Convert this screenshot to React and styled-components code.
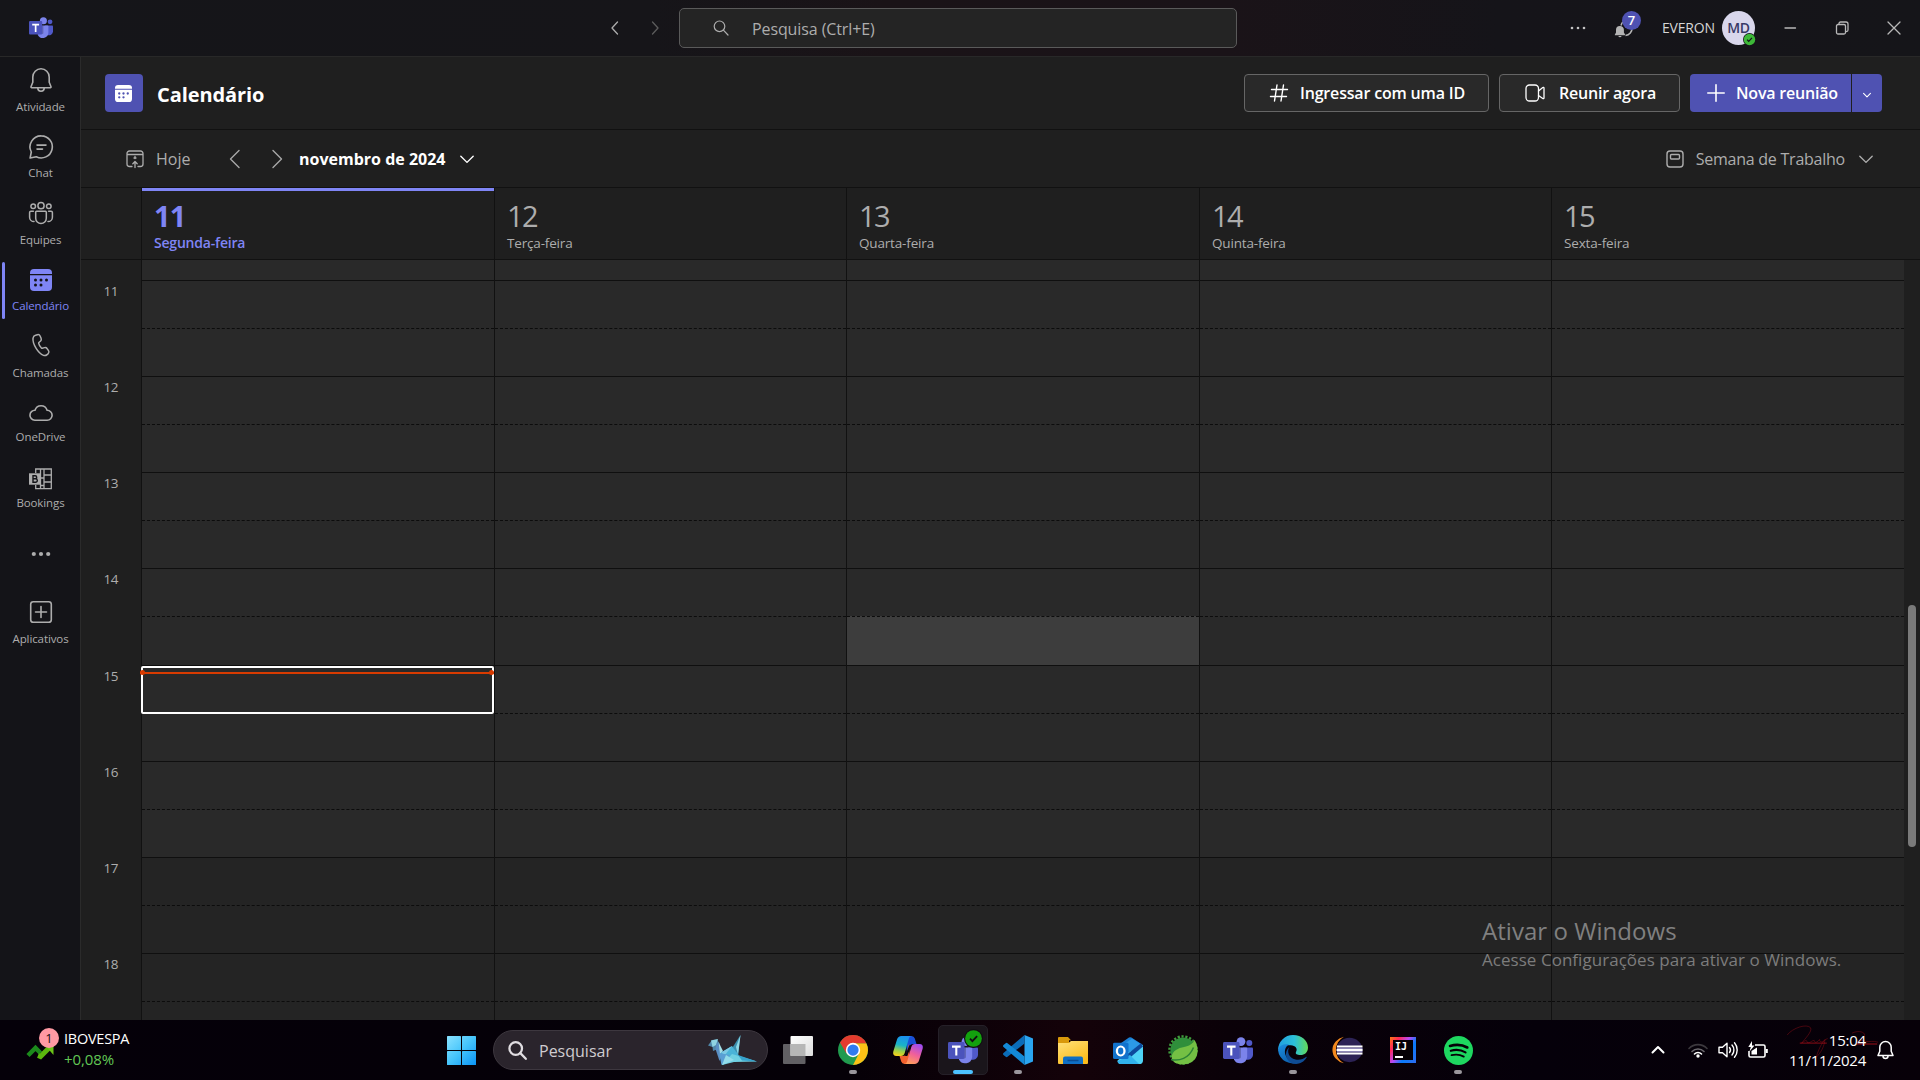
import React from "react";
import styled, { createGlobalStyle, css } from "styled-components";

const GlobalStyle = createGlobalStyle`
  *, *::before, *::after { box-sizing: border-box; }
  html, body { margin: 0; padding: 0; background: #1f1f1f; }
  body {
    width: 1920px; height: 1080px; overflow: hidden;
    font-family: "Open Sans", "Noto Sans", sans-serif;
    color: #fff;
  }
  svg { display: block; flex: none; overflow: visible; }
`;

const Screen = styled.div`
  width: 1920px;
  height: 1080px;
  display: flex;
  flex-direction: column;
  position: relative;
`;

/* ---------- shared ---------- */
const Text = styled.span`
  white-space: nowrap;
  display: block;
  font-size: ${(p) => p.$size || 16}px;
  font-weight: ${(p) => p.$weight || 400};
  letter-spacing: ${(p) => p.$track || 0}px;
  line-height: ${(p) => p.$line || 20}px;
  color: ${(p) => p.$color || "#fff"};
  margin-top: ${(p) => p.$drop || 0}px;
`;

const Stroke = ({ w, h = w, box, color = "currentColor", width = 1.3, children }) => (
  <svg width={w} height={h} viewBox={box || `0 0 ${w} ${h}`} fill="none" stroke={color} strokeWidth={width} strokeLinecap="round" strokeLinejoin="round">
    {children}
  </svg>
);

/* ---------- title bar ---------- */
const TitleBar = styled.header`
  height: 57px;
  flex: none;
  display: flex;
  align-items: center;
  border-bottom: 1px solid #282828;
  background: linear-gradient(90deg, #151519 0%, #161519 34%, #1a1317 46%, #1a1318 64%, #151419 78%, #151519 100%);
  color: #d6d6d6;
`;
const LogoSlot = styled.div`
  width: 607px;
  padding-left: 29px;
`;
const NavPair = styled.div`
  display: flex;
  width: 72px;
  gap: 24px;
  color: #adadad;
  & > :last-child { color: #5c5c5c; }
`;
const SearchBox = styled.div`
  width: 558px;
  height: 40px;
  border: 1px solid #5a5a5a;
  border-radius: 5px;
  background: #242424;
  display: flex;
  align-items: center;
  padding-left: 33px;
  gap: 23px;
  color: #adadad;
`;
const TitleRight = styled.div`
  flex: 1;
  display: flex;
  align-items: center;
  padding-left: 333px;
`;
const BellWrap = styled.div`
  position: relative;
  width: 24px;
  height: 24px;
  margin-left: 28px;
  color: #b4b4b4;
`;
const CountBadge = styled.span`
  position: absolute;
  left: 8px;
  top: -5px;
  width: 19px;
  height: 19px;
  border-radius: 50%;
  background: #4f52b2;
  color: #fff;
  font-size: 13px;
  font-weight: 600;
  line-height: 19px;
  text-align: center;
`;
const UserName = styled(Text)`
  width: 52px;
  margin: 0 8px 0 24px;
`;
const Avatar = styled.div`
  position: relative;
  width: 33px;
  height: 34px;
  border-radius: 50%;
  background: #d9d7ec;
  color: #383966;
  font-size: 14px;
  font-weight: 600;
  line-height: 34px;
  text-align: center;
  letter-spacing: -0.3px;
`;
const Presence = styled.span`
  position: absolute;
  right: -1px;
  bottom: -1px;
`;
const WindowButtons = styled.div`
  display: flex;
  align-items: center;
  margin-left: 28px;
  gap: 38px;
  color: #b8b8b8;
`;

/* ---------- body ---------- */
const Body = styled.div`
  height: 963px;
  display: flex;
  flex: none;
`;
const Rail = styled.nav`
  width: 81px;
  flex: none;
  border-right: 1px solid #2b2b2b;
  background: #141418;
  display: flex;
  flex-direction: column;
`;
const RailItem = styled.div`
  position: relative;
  height: ${(p) => p.$h}px;
  flex: none;
  padding: 10px 0 0 1px;
  display: flex;
  flex-direction: column;
  align-items: center;
  gap: ${(p) => p.$gap || 6}px;
  color: ${(p) => (p.$active ? "#7f85f5" : "#adadad")};
  ${(p) =>
    p.$active &&
    css`
      &::before {
        content: "";
        position: absolute;
        left: 2px;
        top: 5px;
        width: 3px;
        height: 57px;
        border-radius: 2px;
        background: #7f85f5;
      }
    `}
`;
const RailIcon = styled.div`
  height: 26px;
  display: flex;
  align-items: center;
  justify-content: center;
`;
const RailLabel = styled.span`
  font-size: 11.5px;
  letter-spacing: -0.1px;
  line-height: 16px;
  white-space: nowrap;
`;

const Main = styled.main`
  flex: 1;
  background: #1f1f1f;
  display: flex;
  flex-direction: column;
  min-width: 0;
`;
const PageHeader = styled.div`
  height: 73px;
  flex: none;
  border-bottom: 1px solid #111;
  display: flex;
  align-items: center;
  padding: 0 38px 0 24px;
`;
const AppTile = styled.div`
  width: 38px;
  height: 38px;
  border-radius: 4px;
  background: #4f52b2;
  display: flex;
  align-items: center;
  justify-content: center;
  padding-right: 1px;
  margin-right: 14px;
`;
const Actions = styled.div`
  margin-left: auto;
  display: flex;
  gap: 10px;
`;
const OutlineButton = styled.button`
  width: ${(p) => p.$w}px;
  height: 38px;
  padding: 0 0 0 ${(p) => p.$pad}px;
  border: 1px solid #666;
  border-radius: 4px;
  background: #292929;
  color: #fff;
  font: inherit;
  display: flex;
  align-items: center;
  gap: ${(p) => p.$gap}px;
`;
const SplitButton = styled.div`
  width: 192px;
  height: 38px;
  border-radius: 4px;
  background: #4f52b2;
  display: flex;
  overflow: hidden;
`;
const SplitMain = styled.div`
  width: 162px;
  border-right: 1px solid #1f1f1f;
  display: flex;
  align-items: center;
  padding-left: 17px;
  gap: 11px;
`;
const SplitMore = styled.div`
  flex: 1;
  display: flex;
  align-items: center;
  justify-content: center;
  padding-top: 4px;
`;
const Toolbar = styled.div`
  height: 58px;
  flex: none;
  border-bottom: 1px solid #111;
  display: flex;
  align-items: center;
  padding: 0 45px;
  color: #adadad;
`;
const TodayGroup = styled.div`
  display: flex;
  align-items: center;
  gap: 12px;
  width: 103px;
`;
const Arrows = styled.div`
  display: flex;
  gap: 30px;
  width: 70px;
  color: #a8a8a8;
`;
const MonthPicker = styled.div`
  display: flex;
  align-items: center;
  gap: 13px;
  color: #fff;
`;
const ViewPicker = styled.div`
  margin-left: auto;
  display: flex;
  align-items: center;
  gap: 12px;
`;

const DayHeaderRow = styled.div`
  height: 72px;
  flex: none;
  display: flex;
  border-bottom: 1px solid #111;
  padding-left: 60px;
`;
const columns = css`
  display: grid;
  grid-template-columns: 353px 352px 353px 352px 353px;
`;
const DayHeaders = styled.div`
  ${columns}
`;
const DayHeader = styled.div`
  border-left: 1px solid #111;
  padding: 11px 0 0 12px;
  color: ${(p) => (p.$today ? "#7f85f5" : "#adadad")};
  box-shadow: ${(p) => (p.$today ? "inset 0 3px 0 #7f85f5" : "none")};
`;
const DayNumber = styled.div`
  font-size: 29px;
  line-height: 34px;
  font-weight: ${(p) => (p.$today ? 700 : 400)};
  letter-spacing: ${(p) => (p.$today ? -0.9 : -1.5)}px;
`;
const DayName = styled.div`
  margin-top: 1px;
  font-size: ${(p) => (p.$today ? 14 : 13.5)}px;
  line-height: 18px;
  font-weight: ${(p) => (p.$today ? 600 : 400)};
  letter-spacing: ${(p) => (p.$today ? -0.2 : -0.17)}px;
`;
const Grid = styled.div`
  flex: 1;
  min-height: 0;
  overflow: hidden;
  display: flex;
`;
const Hours = styled.div`
  width: 60px;
  flex: none;
  padding-top: 22px;
`;
const Hour = styled.div`
  height: ${(p) => p.$h}px;
  padding-left: 22.5px;
  font-size: 13.5px;
  line-height: 18px;
  letter-spacing: -0.5px;
  color: #adadad;
`;
const Columns = styled.div`
  flex: none;
  ${columns}
`;
const Column = styled.div`
  border-left: 1px solid #111;
  position: relative;
`;
const Slot = styled.div`
  height: ${(p) => p.$h}px;
  background: ${(p) => (p.$hover ? "#3d3d3d" : p.$off ? "#242424" : "#292929")};
  border-top: ${(p) => (p.$first ? "none" : p.$half ? "1px dashed #0c0c0c" : "1px solid #0f0f0f")};
`;
const SelectedSlot = styled.div`
  position: absolute;
  left: -1px;
  top: 406px;
  width: 353px;
  height: 48px;
  border: 2px solid #fff;
  border-radius: 2px;
`;
const NowLine = styled.div`
  position: absolute;
  left: -2px;
  top: 412px;
  width: 354px;
  height: 2px;
  background: #d83b01;
  &::before, &::after {
    content: "";
    position: absolute;
    top: -2px;
    width: 5px;
    height: 5px;
    border-radius: 50%;
    background: #d83b01;
  }
  &::before { left: 0; }
  &::after { right: 0; }
`;
const ScrollTrack = styled.div`
  flex: 1;
  padding: 345px 4px 0;
`;
const ScrollThumb = styled.div`
  height: 242px;
  border-radius: 4px;
  background: #7a7a7a;
`;

/* ---------- activation notice ---------- */
const Notice = styled.div`
  position: absolute;
  left: 1482px;
  top: 914px;
`;

/* ---------- taskbar ---------- */
const Taskbar = styled.footer`
  height: 60px;
  flex: none;
  background: linear-gradient(90deg, #050009 0%, #050007 44%, #140209 56%, #0a0108 64%, #05000a 80%, #070008 100%);
  display: flex;
  align-items: center;
`;
const Widget = styled.div`
  width: 434px;
  padding: 0 0 2px 26px;
  display: flex;
  align-items: center;
  gap: 10px;
`;
const WidgetIcon = styled.div`
  position: relative;
  width: 28px;
  height: 38px;
  padding-top: 13px;
`;
const WidgetBadge = styled.span`
  position: absolute;
  left: 13px;
  top: -2px;
  width: 20px;
  height: 20px;
  border-radius: 50%;
  background: #ff99a4;
  color: #1b1013;
  font-size: 13px;
  line-height: 20px;
  text-align: center;
`;
const StartSlot = styled.div`
  width: 59px;
  padding-left: 13px;
`;
const TaskSearch = styled.div`
  width: 275px;
  height: 40px;
  border-radius: 20px;
  background: #2a242c;
  border: 1px solid #3d373f;
  display: flex;
  align-items: center;
  padding-left: 14px;
`;
const TaskSearchText = styled(Text)`
  margin: 2px 0 0 12px;
`;
const BirdSlot = styled.div`
  margin-left: auto;
  margin-right: 10px;
`;
const Apps = styled.div`
  display: flex;
  margin-left: 2.5px;
`;
const AppSlot = styled.div`
  position: relative;
  width: 55px;
  height: 60px;
  display: flex;
  align-items: center;
  justify-content: center;
  ${(p) =>
    p.$running &&
    css`
      &::after {
        content: "";
        position: absolute;
        left: 50%;
        top: 50px;
        width: ${p.$current ? 20 : 8}px;
        height: 4px;
        margin-left: ${p.$current ? -10 : -4}px;
        border-radius: 2px;
        background: ${p.$current ? "#4cc2ff" : "#9a969c"};
      }
    `}
`;
const CurrentTile = styled.div`
  width: 50px;
  height: 50px;
  border-radius: 5px;
  border: 1px solid #252028;
  background: #1a151b;
  display: flex;
  align-items: center;
  justify-content: center;
`;
const CheckBadge = styled.div`
  position: absolute;
  left: 28px;
  top: 9px;
`;
const Tray = styled.div`
  margin-left: auto;
  padding-right: 26px;
  display: flex;
  align-items: center;
`;
const TrayIcon = styled.div`
  width: ${(p) => p.$w}px;
  display: flex;
`;
const Clock = styled.div`
  position: relative;
  width: 98px;
  margin-right: 11px;
  display: flex;
  flex-direction: column;
  align-items: flex-end;
  & > span { position: relative; }
`;
const Signature = styled.div`
  position: absolute;
  left: 17px;
  top: -4px;
`;

/* ---------- icons ---------- */
const Chevron = ({ dir, size = 16, width = 1.3 }) => {
  const d = {
    left: "M10.500 2L5 8l5.500 6",
    right: "M5.500 2L11 8l-5.500 6",
    down: "M2.500 5.500L8 11l5.500-5.500",
    up: "M2.500 10.500L8 5l5.500 5.500",
  }[dir];
  return (
    <Stroke w={size} box="0 0 16 16" width={width}>
      <path d={d} vectorEffect="non-scaling-stroke" />
    </Stroke>
  );
};

const BigAngle = ({ dir }) => (
  <Stroke w={12} h={20} width={1.4}>
    <path d={dir === "left" ? "M10 1.500L1.500 10L10 18.500" : "M2 1.500L10.500 10L2 18.500"} />
  </Stroke>
);

const TeamsLogo = ({ w, h }) => (
  <svg width={w} height={h} viewBox="0 0 30 27">
    <circle cx="26.300" cy="6" r="3" fill="#5059c9" />
    <circle cx="18" cy="4.600" r="4.400" fill="#7b83eb" />
    <path d="M20 10.500h9a1 1 0 011 1V18a5 5 0 01-7 4.400z" fill="#5059c9" />
    <path d="M11 10.500h12.200a1 1 0 011 1V20a7 7 0 01-13.200 2.500z" fill="#7b83eb" />
    <path d="M11 10.500h7V20a1.400 1.400 0 01-1.400 1.400H11z" fill="#000" opacity=".22" />
    <rect x="0" y="5" width="16.500" height="17" rx="1.400" fill="#4b53bc" />
    <path d="M4 9.600h8.600M8.300 9.600v9" stroke="#fff" strokeWidth="2.100" fill="none" />
  </svg>
);

const SearchGlyph = ({ size, width, color }) => (
  <Stroke w={size} box="0 0 16 16" width={width} color={color}>
    <circle cx="6.500" cy="6.300" r="5.300" />
    <path d="M10.400 10.200L15 15" />
  </Stroke>
);

const CalendarSolid = ({ size, fg, dot }) => (
  <svg width={size} height={size} viewBox="0 0 22 22">
    <path d="M0 5V4a4 4 0 014-4h14a4 4 0 014 4v1z" fill={fg} />
    <path d="M0 6.300h22V18a4 4 0 01-4 4H4a4 4 0 01-4-4z" fill={fg} />
    {[[5.5, 11], [11, 11], [16.5, 11], [5.5, 16], [11, 16]].map(([x, y]) => (
      <circle key={x + "-" + y} cx={x} cy={y} r="1.500" fill={dot} />
    ))}
  </svg>
);

const ICON = {
  bell: (
    <Stroke w={24} h={26} width={1.6}>
      <path d="M12 1.800a8.200 8.200 0 00-8.200 8.200v5.200L2 19.700c-.2.500.1 1 .7 1h18.600c.6 0 .9-.5.700-1l-1.800-4.500V10A8.200 8.200 0 0012 1.800z" />
      <path d="M8.800 21a3.200 3.200 0 006.400 0" />
    </Stroke>
  ),
  chat: (
    <Stroke w={26} width={1.6}>
      <path d="M13.300 1.900a11 11 0 11-5 20.800L2.100 24l1.200-6A11 11 0 0113.300 1.900z" />
      <path d="M9 11.100h9M9 15.100h5.500" />
    </Stroke>
  ),
  teams: (
    <Stroke w={26} width={1.5}>
      <circle cx="13" cy="5.700" r="3.100" />
      <circle cx="5.200" cy="6.200" r="2.300" />
      <circle cx="20.800" cy="6.200" r="2.300" />
      <path d="M8.600 11.300h8.800a.9.900 0 01.9.900v6.100a5.300 5.300 0 01-10.600 0v-6.100a.9.900 0 01.9-.9z" />
      <path d="M5.400 11.300H2.900a1.300 1.300 0 00-1.300 1.300v4.600a4.400 4.400 0 004.400 4.400M20.600 11.300h2.500a1.300 1.300 0 011.300 1.300v4.600a4.400 4.400 0 01-4.400 4.400" />
    </Stroke>
  ),
  phone: (
    <Stroke w={20} h={26} width={1.5}>
      <path d="M4.500 2.300l1.900-.6c1.100-.3 2.200.2 2.700 1.300l1 2.300c.4.900.2 2-.5 2.700l-1.700 1.500c-.2.200-.3.500-.2.900.3 1.500 1.300 3.300 2.700 4.600.3.300.6.400.9.300l2.200-.7c1-.3 2 .1 2.500.9l1.500 2.100c.7 1 .5 2.200-.3 3l-1.100 1c-1 .9-2.400 1.200-3.600.8-2.700-.9-5.200-3.400-7.500-7.200C2.700 11.300 1.700 8 2 5.400c.2-1.500 1.100-2.700 2.500-3.100z" />
    </Stroke>
  ),
  cloud: (
    <Stroke w={24} h={18} width={1.6}>
      <path d="M6 6.300A6.300 6.300 0 0118.100 6.300a4.900 4.900 0 01.1 9.900H5.800a4.900 4.900 0 01.2-9.900z" />
    </Stroke>
  ),
  bookings: (
    <svg width="23" height="22" viewBox="0 0 23 22" fill="none" stroke="currentColor" strokeWidth="1.300">
      <path d="M6.700 5V1h15.600v19.700H6.700V17" />
      <path d="M11.500 1v19.700M15 1v19.700M11.500 10h3.500M15 7h7.300M15 14h7.300M11.500 17.500h3.500" />
      <rect x="0" y="5.300" width="11" height="11.400" fill="#adadad" stroke="none" />
      <path d="M4 7.800h2.200a1.500 1.500 0 010 3H4zM4 10.800h2.600a1.700 1.700 0 010 3.400H4z" stroke="#141418" strokeWidth="1.400" />
    </svg>
  ),
  more: (
    <svg width="20" height="6" viewBox="0 0 20 6" fill="currentColor">
      <circle cx="2.800" cy="3" r="2.100" /><circle cx="10" cy="3" r="2.100" /><circle cx="17.200" cy="3" r="2.100" />
    </svg>
  ),
  apps: (
    <Stroke w={24} width={1.6}>
      <rect x="1.700" y="1.700" width="20.600" height="20.600" rx="2.600" />
      <path d="M12 6.500v11M6.500 12h11" />
    </Stroke>
  ),
};

const RAIL = [
  { label: "Atividade", icon: ICON.bell, h: 67, gap: 6 },
  { label: "Chat", icon: ICON.chat, h: 66, gap: 5 },
  { label: "Equipes", icon: ICON.teams, h: 67, gap: 6 },
  { label: "Calendário", icon: <CalendarSolid size={22} fg="#7f85f5" dot="#141418" />, h: 66, gap: 5, active: true },
  { label: "Chamadas", icon: ICON.phone, h: 67, gap: 6 },
  { label: "OneDrive", icon: ICON.cloud, h: 66, gap: 3 },
  { label: "Bookings", icon: ICON.bookings, h: 75, gap: 3 },
  { label: "", icon: ICON.more, h: 58 },
  { label: "Aplicativos", icon: ICON.apps, h: 66, gap: 6 },
];

const DAYS = [
  { n: "11", name: "Segunda-feira", today: true },
  { n: "12", name: "Terça-feira" },
  { n: "13", name: "Quarta-feira" },
  { n: "14", name: "Quinta-feira" },
  { n: "15", name: "Sexta-feira" },
];

const SLOTS = [
  { h: 20, first: true },
  { h: 48 }, { h: 48, half: true },
  { h: 48 }, { h: 48, half: true },
  { h: 48 }, { h: 48, half: true },
  { h: 48 }, { h: 49, half: true, id: "14:30" },
  { h: 48 }, { h: 48, half: true },
  { h: 48 }, { h: 48, half: true },
  { h: 48, off: true }, { h: 48, half: true, off: true },
  { h: 48, off: true }, { h: 48, half: true, off: true },
];

/* ---------- taskbar drawings ---------- */
const StartLogo = () => (
  <svg width="29" height="29" viewBox="0 0 29 29">
    <defs>
      <linearGradient id="win" gradientUnits="userSpaceOnUse" x1="0" y1="0" x2="29" y2="29">
        <stop offset="0" stopColor="#8ae2ff" />
        <stop offset=".5" stopColor="#45c4fb" />
        <stop offset="1" stopColor="#0a93f5" />
      </linearGradient>
    </defs>
    <rect x="0" y="0" width="14" height="14" rx=".6" fill="url(#win)" />
    <rect x="15" y="0" width="14" height="14" rx=".6" fill="url(#win)" />
    <rect x="0" y="15" width="14" height="14" rx=".6" fill="url(#win)" />
    <rect x="15" y="15" width="14" height="14" rx=".6" fill="url(#win)" />
  </svg>
);

const Bird = () => (
  <svg width="49" height="31" viewBox="0 0 49 31">
    <path d="M0 10.500L4 5l5-.6 2.500 4-1.500 5.500-5 2-.5-4z" fill="#4f86a8" />
    <path d="M3 5.500l7-1.500-2 6-3.500 2z" fill="#8fd4e2" />
    <path d="M9 7l5.500 10.500L11.500 26l-4-12z" fill="#5a8fc4" />
    <path d="M10.500 7L15 16l-3 3z" fill="#a4dde6" />
    <path d="M32.500 0l-8 12.500 5.500 8z" fill="#3d8fae" />
    <path d="M32.500 0L30 20l-2-8z" fill="#8fd8e6" />
    <path d="M13 17.500L24 11l8 11-18 8z" fill="#4ab4d8" />
    <path d="M24 11l-7 9-4-2.500z" fill="#7cc9e4" />
    <path d="M11 18l2.500 12L22 20z" fill="#5a9fd4" />
    <path d="M14 30L24 19l25 7.500L26 27z" fill="#6fd0e2" />
    <path d="M14 30l4-10 8 5z" fill="#93dcea" />
    <path d="M30 20l19 6.500-15-1z" fill="#36a2cc" />
  </svg>
);

const TaskView = () => (
  <svg width="30" height="28" viewBox="0 0 30 28">
    <defs>
      <linearGradient id="tv" x1="0" y1="0" x2="1" y2="1"><stop offset="0" stopColor="#fff" /><stop offset="1" stopColor="#dcdcdc" /></linearGradient>
    </defs>
    <rect x="0" y="8" width="22.500" height="20" rx="1" fill="#626064" />
    <rect x="7.500" y="0" width="22.500" height="20" rx="1" fill="url(#tv)" />
    <path d="M7.500 8h15v12h-15z" fill="#b6b6b6" />
  </svg>
);

const Chrome = () => (
  <svg width="30" height="30" viewBox="0 0 48 48">
    <circle cx="24" cy="24" r="24" fill="#219a4e" />
    <path d="M24 13h21.300A24 24 0 0124 48l9.500-18.500z" fill="#fbc116" />
    <path d="M24 13h21.300A24 24 0 003.200 12l10.300 17.500z" fill="#e33b2e" />
    <circle cx="24" cy="24" r="11.500" fill="#fff" />
    <circle cx="24" cy="24" r="9" fill="#2f7bf0" />
  </svg>
);

const Copilot = () => (
  <svg width="30" height="28" viewBox="0 0 30 28">
    <defs>
      <linearGradient id="cpA" x1=".5" y1="0" x2=".3" y2="1">
        <stop offset="0" stopColor="#1b8ff0" /><stop offset=".45" stopColor="#19b3c8" /><stop offset=".75" stopColor="#9fd046" /><stop offset="1" stopColor="#f5d21b" />
      </linearGradient>
      <linearGradient id="cpB" x1=".7" y1="0" x2=".3" y2="1">
        <stop offset="0" stopColor="#a04cf0" /><stop offset=".5" stopColor="#f0609a" /><stop offset="1" stopColor="#ff9f5a" />
      </linearGradient>
    </defs>
    <path d="M13 0h5.500a3.500 3.500 0 013.300 2.500L23.500 8H20c-2 0-3 1-3.500 2.500L14 20z" fill="#1a50d8" />
    <path d="M17 28h-5.500a3.500 3.500 0 01-3.300-2.500L6.500 20H10c2 0 3-1 3.500-2.500L16 8z" fill="#f2622f" />
    <path d="M8.500 0H19c-2 0-2.700 1-3.300 3l-4 14c-.6 2-1.700 3-3.700 3H3.500C.8 20-.4 18 .3 15.500L4 3.500C4.700 1.200 6.200 0 8.500 0z" fill="url(#cpA)" />
    <path d="M21.500 28H11c2 0 2.700-1 3.300-3l4-14c.6-2 1.700-3 3.700-3h4.500c2.700 0 3.900 2 3.200 4.500L26 24.500c-.7 2.300-2.200 3.500-4.500 3.500z" fill="url(#cpB)" />
    <path d="M16.200 9.500L18.600 9l-4.300 11h-2.400z" fill="#0c0410" />
  </svg>
);

const VSCode = () => (
  <svg width="30" height="30" viewBox="0 0 30 30">
    <path d="M21.500 0L30 3.600v22.800L21.500 30z" fill="#2aa5f0" />
    <path d="M21.500 0v8.500L4.500 21.800a1.400 1.400 0 01-1.800 0L.5 19.900a1.200 1.200 0 010-1.800z" fill="#0b6cb8" />
    <path d="M21.500 30v-8.500L4.500 8.200a1.400 1.400 0 00-1.800 0L.5 10.100a1.200 1.200 0 000 1.800z" fill="#1389d6" />
  </svg>
);

const Explorer = () => (
  <svg width="30" height="27" viewBox="0 0 30 27">
    <defs><linearGradient id="fo" x1="0" y1="0" x2=".6" y2="1"><stop offset="0" stopColor="#ffe17a" /><stop offset="1" stopColor="#fbbc1c" /></linearGradient></defs>
    <path d="M0 1a1 1 0 011-1h9l3 3.200h-2V9H0z" fill="#d9990b" />
    <path d="M0 6h10.500L13 4h17v22a1 1 0 01-1 1H1a1 1 0 01-1-1z" fill="url(#fo)" />
    <path d="M5 27v-5.500a2 2 0 012-2h16a2 2 0 012 2V27z" fill="#0f6fc4" />
    <path d="M9.500 23.500h11" stroke="#0a4c92" strokeWidth="1.500" />
  </svg>
);

const Outlook = () => (
  <svg width="30" height="27" viewBox="0 0 30 30" preserveAspectRatio="none">
    <path d="M4.500 9.500L16 .6a2 2 0 012.400 0L30 9v14l-14 4-11.500-6z" fill="#1a7fd4" />
    <path d="M16 16L30 9v17a4 4 0 01-4 4H8.500a4 4 0 01-4-4z" fill="#4fd3f6" />
    <path d="M6 11L19 2l9 6-12 9z" fill="#2c9ae6" />
    <path d="M12 21l16-14 2 3.500L16 24z" fill="#0d4a9c" />
    <path d="M4.500 27L17 20l9 10H8a3.500 3.500 0 01-3.500-3z" fill="#31b2ec" />
    <rect x="0" y="6.500" width="15.500" height="18" rx="1.500" fill="#1172cc" />
    <ellipse cx="7.700" cy="15.500" rx="3.800" ry="5" fill="none" stroke="#fff" strokeWidth="2.300" />
  </svg>
);

const Spring = () => (
  <svg width="30" height="30" viewBox="0 0 30 30">
    <circle cx="15" cy="15" r="12.600" fill="#2f8f3b" />
    <circle cx="15" cy="15" r="13.600" fill="none" stroke="#3f9c3c" strokeWidth="2.400" strokeDasharray="2.200 1.683" />
    <path d="M26.500 5c5 8 5 21.500-8 24C8 31 2 25.500 4 20c2-6 9-7.500 14-8.500 4.500-1 7-3.500 8.500-6.500z" fill="#74c044" />
    <path d="M3 24.500c8 2 18-1 22.500-12" fill="none" stroke="#2d8336" strokeWidth="1.500" />
  </svg>
);

const Edge = () => (
  <svg width="30" height="30" viewBox="0 0 30 30">
    <defs>
      <linearGradient id="edA" x1="0" y1=".4" x2="1" y2=".4"><stop offset="0" stopColor="#219fe0" /><stop offset=".55" stopColor="#2cc0d8" /><stop offset="1" stopColor="#63d957" /></linearGradient>
      <linearGradient id="edB" x1="0" y1="0" x2=".6" y2="1"><stop offset="0" stopColor="#1c8fe0" /><stop offset="1" stopColor="#0c5dac" /></linearGradient>
    </defs>
    <path d="M0 15A15 15 0 0115 0c9 0 15 6 15 12.500 0 5-3.500 7.500-7.500 7.500-3.500 0-5.500-1.200-4.500-3 1.500-2.500.5-5.500-3.500-6.500C9 9.500 2.500 11 0 15z" fill="url(#edA)" />
    <path d="M0 15c1-4.500 6-6.500 11-5.500-3.500 2-5 6-3.500 10.500 2 5.500 8 8.500 14 7A15 15 0 010 15z" fill="url(#edB)" />
    <path d="M11.500 12c-3 4-1 11 6 12.500 4.500.8 8-.5 10.500-2.500.5-.4.900.1.600.6C24 30.500 14 31 9.500 24.500c-2.500-4-2-9.500 2-12.500z" fill="#0f4c94" />
  </svg>
);

const Eclipse = () => (
  <svg width="30" height="28" viewBox="0 0 30 30" preserveAspectRatio="none">
    <path d="M11 .8A14.500 14.500 0 0011 29.200a16.500 16.500 0 010-28.400z" fill="#f58a1f" />
    <circle cx="16.500" cy="15" r="13" fill="#2c2255" />
    <path d="M4 11.300h25.500M3.600 15h26M4 18.700h25.500" stroke="#fff" strokeWidth="2.100" />
    <path d="M4 13.200h25.500M4 16.800h25.500" stroke="#8f88b8" strokeWidth="1.200" />
  </svg>
);

const JetTile = styled.div`
  width: 26px;
  height: 26px;
  padding: 3px;
  background: linear-gradient(125deg, #f97a12 0%, #fe2857 22%, #b74af7 45%, #087cfa 65%, #2f6cf0 100%);
`;
const JetInner = styled.div`
  height: 20px;
  background: #050005;
  color: #fff;
  font-family: "DejaVu Sans Mono", monospace;
  font-size: 10px;
  font-weight: 700;
  line-height: 11px;
  padding: 1px 0 0 2px;
  &::after {
    content: "";
    display: block;
    width: 8px;
    height: 1.5px;
    margin-top: 4px;
    background: #fff;
  }
`;
const IntelliJ = () => <JetTile><JetInner>IJ</JetInner></JetTile>;

const Spotify = () => (
  <svg width="29" height="29" viewBox="0 0 29 29">
    <circle cx="14.500" cy="14.500" r="14.500" fill="#1ed760" />
    <g fill="none" stroke="#050007" strokeLinecap="round">
      <path d="M6 10c6-1.800 12.500-1.200 17.300 1.500" strokeWidth="2.600" />
      <path d="M6.800 14.800c5-1.400 10.500-.8 14.700 1.600" strokeWidth="2.200" />
      <path d="M7.500 19.200c4.300-1.200 8.800-.6 12.300 1.400" strokeWidth="1.800" />
    </g>
  </svg>
);

const Check = ({ r, ring, fill }) => (
  <svg width={r * 2} height={r * 2} viewBox="0 0 20 20">
    <circle cx="10" cy="10" r="10" fill={ring} />
    <circle cx="10" cy="10" r="8.800" fill={fill} />
    <path d="M6.300 10.200l2.500 2.600 5-5.300" fill="none" stroke={ring} strokeWidth="1.900" />
  </svg>
);

export default function App() {
  return (
    <Screen>
      <GlobalStyle />
      <TitleBar>
        <LogoSlot><TeamsLogo w={24} h={21.6} /></LogoSlot>
        <NavPair>
          <Chevron dir="left" />
          <Chevron dir="right" />
        </NavPair>
        <SearchBox>
          <SearchGlyph size={16} width={1.2} />
          <Text $color="#adadad" $track={-0.1} $drop={1}>Pesquisa (Ctrl+E)</Text>
        </SearchBox>
        <TitleRight>
          <svg width="16" height="4" viewBox="0 0 16 4" fill="#c4c4c4">
            <circle cx="2" cy="2" r="1.300" /><circle cx="8" cy="2" r="1.300" /><circle cx="14" cy="2" r="1.300" />
          </svg>
          <BellWrap>
            <svg width="24" height="24" viewBox="0 0 24 24">
              <path d="M7 9.500a6.500 6.500 0 017-5M18 12a7 7 0 01-6.500 7.500" fill="none" stroke="currentColor" strokeWidth="1.500" />
              <path d="M5.800 10a3.800 3.800 0 00-3.800 3.800v2.600l-1.200 2.300c-.1.300.1.600.5.600h9.400c.4 0 .6-.3.500-.6l-1.300-2.300v-2.600A3.800 3.800 0 005.800 10z" fill="currentColor" />
              <path d="M4.300 20a1.700 1.700 0 003.300 0z" fill="currentColor" />
            </svg>
            <CountBadge>7</CountBadge>
          </BellWrap>
          <UserName $size={14} $track={-0.2} $color="#d6d6d6">EVERON</UserName>
          <Avatar>
            MD
            <Presence><Check r={6.5} ring="#151419" fill="#3db838" /></Presence>
          </Avatar>
          <WindowButtons>
            <Stroke w={14}><path d="M2 7h10.500" /></Stroke>
            <Stroke w={14}>
              <rect x="1.500" y="3.500" width="9" height="9.500" rx="1.500" />
              <path d="M4 3V2.500A1.500 1.500 0 015.500 1H11a2 2 0 012 2v6a1.500 1.500 0 01-1.500 1.500" />
            </Stroke>
            <Stroke w={14}><path d="M1 1l12 12M13 1L1 13" /></Stroke>
          </WindowButtons>
        </TitleRight>
      </TitleBar>

      <Body>
        <Rail>
          {RAIL.map((r, i) => (
            <RailItem key={i} $h={r.h} $gap={r.gap} $active={r.active}>
              <RailIcon>{r.icon}</RailIcon>
              {r.label && <RailLabel>{r.label}</RailLabel>}
            </RailItem>
          ))}
        </Rail>

        <Main>
          <PageHeader>
            <AppTile><CalendarSolid size={17} fg="#fff" dot="#4f52b2" /></AppTile>
            <Text $size={20} $weight={700} $track={-0.08} $drop={3} $line={26}>Calendário</Text>
            <Actions>
              <OutlineButton $w={245} $pad={24} $gap={11}>
                <Stroke w={20} width={1.4}><path d="M8 2L5.500 18M14.500 2L12 18M2.500 6.500h16M1.500 13.500h16" /></Stroke>
                <Text $weight={600} $track={-0.18}>Ingressar com uma ID</Text>
              </OutlineButton>
              <OutlineButton $w={181} $pad={25} $gap={14}>
                <Stroke w={20} h={18} width={1.3}>
                  <rect x="1" y="1" width="12.500" height="16" rx="3.500" />
                  <path d="M13.500 7l4.300-3.500c.5-.4 1.200-.1 1.200.5v10c0 .6-.7.900-1.200.5L13.500 11.500" />
                </Stroke>
                <Text $weight={600} $track={-0.2}>Reunir agora</Text>
              </OutlineButton>
              <SplitButton>
                <SplitMain>
                  <Stroke w={18} width={1.6}><path d="M9 .8v16.400M.8 9h16.400" /></Stroke>
                  <Text $weight={600} $track={-0.2}>Nova reunião</Text>
                </SplitMain>
                <SplitMore><Chevron dir="down" size={10} width={1.1} /></SplitMore>
              </SplitButton>
            </Actions>
          </PageHeader>

          <Toolbar>
            <TodayGroup>
              <Stroke w={18} width={1.3}>
                <path d="M6 16.500H3.500a2.500 2.500 0 01-2.500-2.500V3.500A2.500 2.500 0 013.500 1h11A2.500 2.500 0 0117 3.500V14a2.500 2.500 0 01-2.500 2.500H12M1 4.500h16M9 17.500V12M6.800 13.800L9 11.500l2.200 2.300M9 6.500v2M8 8h2" />
              </Stroke>
              <Text $color="#adadad">Hoje</Text>
            </TodayGroup>
            <Arrows>
              <BigAngle dir="left" />
              <BigAngle dir="right" />
            </Arrows>
            <MonthPicker>
              <Text $weight={700}>novembro de 2024</Text>
              <Chevron dir="down" size={18} width={1.4} />
            </MonthPicker>
            <ViewPicker>
              <Stroke w={18} width={1.4}>
                <rect x="1" y="1" width="16" height="16" rx="3" />
                <rect x="4.500" y="4.500" width="9" height="4.500" rx="1" />
              </Stroke>
              <Text $color="#adadad" $track={-0.24}>Semana de Trabalho</Text>
              <Chevron dir="down" size={18} width={1.4} />
            </ViewPicker>
          </Toolbar>

          <DayHeaderRow>
            <DayHeaders>
              {DAYS.map((d) => (
                <DayHeader key={d.n} $today={d.today}>
                  <DayNumber $today={d.today}>{d.n}</DayNumber>
                  <DayName $today={d.today}>{d.name}</DayName>
                </DayHeader>
              ))}
            </DayHeaders>
          </DayHeaderRow>

          <Grid>
            <Hours>
              {[11, 12, 13, 14, 15, 16, 17, 18].map((h) => (
                <Hour key={h} $h={h === 14 ? 97 : 96}>{h}</Hour>
              ))}
            </Hours>
            <Columns>
              {DAYS.map((d) => (
                <Column key={d.n}>
                  {SLOTS.map((s, i) => (
                    <Slot key={i} $h={s.h} $first={s.first} $half={s.half} $off={s.off} $hover={d.n === "13" && s.id === "14:30"} />
                  ))}
                  {d.today && <SelectedSlot />}
                  {d.today && <NowLine />}
                </Column>
              ))}
            </Columns>
            <ScrollTrack><ScrollThumb /></ScrollTrack>
          </Grid>
        </Main>
      </Body>

      <Taskbar>
        <Widget>
          <WidgetIcon>
            <svg width="28" height="16" viewBox="0 0 28 16">
              <path d="M2 12.500L9.500 5l5 5" fill="none" stroke="#1c8a1c" strokeWidth="4.500" />
              <path d="M12 12.500l2.500 1L25 3" fill="none" stroke="#5cb80e" strokeWidth="5" />
              <path d="M18 1h9.500v11z" fill="#6cc418" />
            </svg>
            <WidgetBadge>1</WidgetBadge>
          </WidgetIcon>
          <div>
            <Text $size={14.5} $track={-0.25}>IBOVESPA</Text>
            <Text $size={15} $track={-0.1} $color="#62c655">+0,08%</Text>
          </div>
        </Widget>
        <StartSlot><StartLogo /></StartSlot>
        <TaskSearch>
          <SearchGlyph size={19} width={1.9} color="#e0dde1" />
          <TaskSearchText $size={16} $color="#cfccd0">Pesquisar</TaskSearchText>
          <BirdSlot><Bird /></BirdSlot>
        </TaskSearch>
        <Apps>
          <AppSlot><TaskView /></AppSlot>
          <AppSlot $running><Chrome /></AppSlot>
          <AppSlot><Copilot /></AppSlot>
          <AppSlot $running $current>
            <CurrentTile><TeamsLogo w={30} h={27} /></CurrentTile>
            <CheckBadge><Check r={9.5} ring="#120d13" fill="#13a10e" /></CheckBadge>
          </AppSlot>
          <AppSlot $running><VSCode /></AppSlot>
          <AppSlot><Explorer /></AppSlot>
          <AppSlot><Outlook /></AppSlot>
          <AppSlot><Spring /></AppSlot>
          <AppSlot><TeamsLogo w={30} h={27} /></AppSlot>
          <AppSlot $running><Edge /></AppSlot>
          <AppSlot><Eclipse /></AppSlot>
          <AppSlot><IntelliJ /></AppSlot>
          <AppSlot $running><Spotify /></AppSlot>
        </Apps>
        <Tray>
          <TrayIcon $w={38}><Chevron dir="up" size={16} width={2} /></TrayIcon>
          <TrayIcon $w={30}>
            <svg width="20" height="16" viewBox="0 0 20 16" fill="none" strokeWidth="1.600" strokeLinecap="round">
              <path d="M1 6.500a12.500 12.500 0 0118 0" stroke="#3c383e" />
              <path d="M4 9.500a8.500 8.500 0 0112 0" stroke="#6a666c" />
              <path d="M6.500 12a5 5 0 017 0" stroke="#fff" />
              <circle cx="10" cy="14" r="1.700" fill="#fff" />
            </svg>
          </TrayIcon>
          <TrayIcon $w={30}>
            <Stroke w={20} h={18} color="#fff" width={1.4}>
              <path d="M1 6.300h3.500L9 2.300v13.400L4.500 11.700H1z" />
              <path d="M11.500 6.500a4 4 0 010 5M14 4a7.500 7.500 0 010 10M16.500 1.800a11 11 0 010 14.400" />
            </Stroke>
          </TrayIcon>
          <TrayIcon $w={20}>
            <svg width="20" height="18" viewBox="0 0 20 18" fill="none" stroke="#fff" strokeWidth="1.600">
              <path d="M7 4h8.500A1.500 1.500 0 0117 5.500v9a1.500 1.500 0 01-1.500 1.500h-13A1.500 1.500 0 011 14.500V10" />
              <path d="M18.800 8v4" strokeWidth="2" />
              <path d="M3.500 13.500V10L9 6.500v7z" fill="#fff" stroke="none" />
              <path d="M4 0L.3 6h2.500L1.500 10.500 6.500 4.500H4z" fill="#fff" stroke="none" />
            </svg>
          </TrayIcon>
          <Clock>
            <Signature>
              <svg width="98" height="36" viewBox="0 0 104 40" fill="none" stroke="#9c0f18" strokeWidth=".8">
                <path d="M0 10C6 2 22-3 26 2c2 4-6 12-10 17 4-3 6-4 6-1 3 2 5-2 8-2 0 3 3 3 6-1 0 4 4 3 6 0-1 8-4 14-10 20 4-12 8-20 13-21" opacity=".6" />
                <path d="M72 8c6-3 12-2 14 1 0 4-5 6-8 9 4-2 7-3 9-1 5 1 8-1 14 1" opacity=".6" />
                <path d="M14 19h30M76 20h24" stroke="#c0101c" strokeWidth="1.600" opacity=".55" />
              </svg>
            </Signature>
            <Text $size={15} $track={-0.2}>15:04</Text>
            <Text $size={15} $track={-0.25}>11/11/2024</Text>
          </Clock>
          <Stroke w={17} h={20} color="#fff" width={1.5}>
            <path d="M8.500 1.500a5.700 5.700 0 00-5.700 5.700v4L1 15.500h15l-1.800-4.300v-4a5.700 5.700 0 00-5.700-5.700z" />
            <path d="M6 16a2.500 2.500 0 005 0" />
          </Stroke>
        </Tray>
      </Taskbar>

      <Notice>
        <Text $size={24} $track={0.05} $line={34} $color="#808080">Ativar o Windows</Text>
        <Text $size={17} $track={0.04} $line={24} $color="#7c7c7c">Acesse Configurações para ativar o Windows.</Text>
      </Notice>
    </Screen>
  );
}
